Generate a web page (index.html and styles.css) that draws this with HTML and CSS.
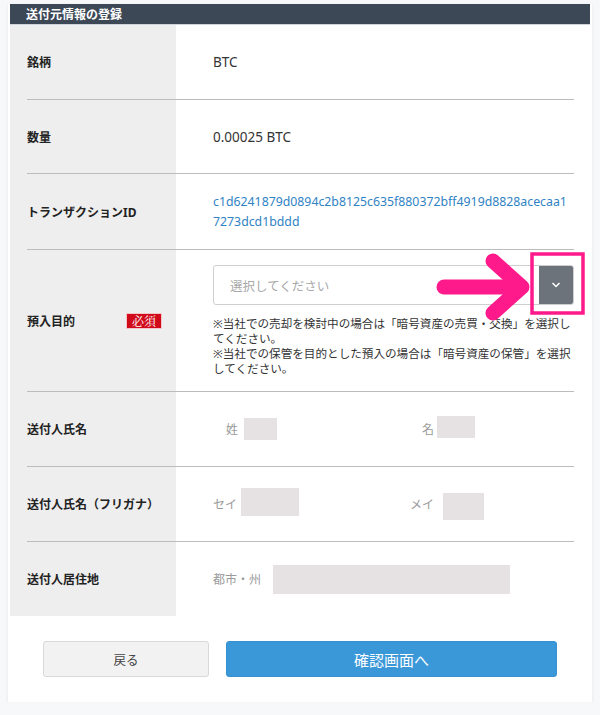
FILE: index.html
```html
<!DOCTYPE html>
<html lang="ja">
<head>
<meta charset="utf-8">
<link rel="stylesheet" href="styles.css">
</head>
<body>
<div class="page">
  <div class="card">
    <div class="card-head">送付元情報の登録</div>
    <div class="table">
      <div class="row row-1">
        <div class="label">銘柄</div>
        <div class="value">BTC</div>
      </div>
      <div class="row row-2">
        <div class="label">数量</div>
        <div class="value">0.00025 BTC</div>
      </div>
      <div class="row row-3">
        <div class="label">トランザクションID</div>
        <div class="value link">c1d6241879d0894c2b8125c635f880372bff4919d8828acecaa17273dcd1bddd</div>
      </div>
      <div class="row row-tall">
        <div class="label">預入目的<span class="req">必須</span></div>
        <div class="value value-top">
          <div class="select-wrap">
            <div class="select">
              <span class="placeholder">選択してください</span>
              <span class="select-btn">
                <svg width="10" height="6" viewBox="0 0 10 6"><path d="M1.5 1 L5 4.5 L8.5 1" fill="none" stroke="#fff" stroke-width="1.5"/></svg>
              </span>
            </div>
            <svg class="annot" width="160" height="70" viewBox="0 0 160 70">
              <path d="M25 35 H100" stroke="#ff1a8c" stroke-width="15" stroke-linecap="round" fill="none"/>
              <path d="M74 9 L103 35 L74 61" stroke="#ff1a8c" stroke-width="15" stroke-linecap="round" stroke-linejoin="round" fill="none"/>
              <rect x="113" y="2" width="51" height="59" fill="none" stroke="#ff1a8c" stroke-width="3.5"/>
            </svg>
          </div>
          <p class="note">※当社での売却を検討中の場合は「暗号資産の売買・交換」を選択してください。<br>※当社での保管を目的とした預入の場合は「暗号資産の保管」を選択してください。</p>
        </div>
      </div>
      <div class="row row-5">
        <div class="label">送付人氏名</div>
        <div class="value names">
          <div class="pair pair-sei"><span class="sub">姓</span><span class="mask m1"></span></div>
          <div class="pair pair-mei"><span class="sub">名</span><span class="mask m2"></span></div>
        </div>
      </div>
      <div class="row row-6">
        <div class="label">送付人氏名（フリガナ）</div>
        <div class="value names">
          <div class="pair pair-kana1"><span class="sub">セイ</span><span class="mask m3"></span></div>
          <div class="pair pair-kana2"><span class="sub">メイ</span><span class="mask m4"></span></div>
        </div>
      </div>
      <div class="row row-last">
        <div class="label">送付人居住地</div>
        <div class="value names">
          <div class="pair"><span class="sub">都市・州</span><span class="mask m5"></span></div>
        </div>
      </div>
    </div>
    <div class="actions">
      <button class="btn btn-back">戻る</button>
      <button class="btn btn-next">確認画面へ</button>
    </div>
  </div>
</div>
</body>
</html>
```
FILE: styles.css
```css
* { box-sizing: border-box; }
html, body {
  margin: 0;
  padding: 0;
  background: #f7f8fa;
  font-family: "Noto Sans", "Noto Sans CJK JP", sans-serif;
  color: #333;
}
.page {
  padding: 4px 8px 0 8px;
}
.card {
  background: #fff;
  padding: 0 2px;
  box-shadow: 0 1px 3px rgba(0,0,0,0.08);
  width: 584px;
}
.card-head {
  height: 21px;
  background: #3d4857;
  color: #fff;
  font-weight: bold;
  font-size: 12px;
  line-height: 21px;
  padding-left: 16px;
  border-bottom: 1px solid #cfd4da;
}
.table {
  background: linear-gradient(to right, #eeeeee 166px, #ffffff 166px);
  padding: 0 16px 0 17px;
}
.row {
  display: flex;
  align-items: center;
  min-height: 74px;
  border-bottom: 1px solid #bcbcbc;
}
.row-1 { min-height: 75px; }
.row-2 { min-height: 74px; }
.row-3 { min-height: 76px; }
.row-tall { min-height: 142px; }
.row-5 { min-height: 75px; }
.row-6 { min-height: 75px; }
.row-last {
  border-bottom: none;
  min-height: 74px;
}
.label {
  width: 149px;
  flex: none;
  font-size: 12px;
  font-weight: bold;
  color: #222;
  display: flex;
  align-items: center;
}
.req {
  margin-left: 51px;
  background: #d10a1b;
  color: #fff;
  font-size: 12px;
  font-weight: normal;
  line-height: 14px;
  padding: 0 5px;
  border: 1px solid #f3c4c8;
  font-family: "Noto Serif CJK JP", "Noto Sans CJK JP", serif;
}
.value {
  flex: 1;
  padding-left: 37px;
  font-size: 13.5px;
  color: #333;
  min-width: 0;
}
.link {
  color: #2f82c4;
  font-size: 12.3px;
  line-height: 20px;
  word-break: break-all;
  padding-top: 1px;
  padding-right: 3px;
}
.value-top {
  align-self: stretch;
  padding-top: 15px;
}
.select-wrap {
  position: relative;
}
.select {
  height: 40px;
  border: 1px solid #cfcfcf;
  border-radius: 3px;
  display: flex;
  align-items: center;
  justify-content: space-between;
  overflow: hidden;
}
.placeholder {
  padding-left: 16px;
  font-size: 12.5px;
  color: #a8a8a8;
}
.select-btn {
  width: 34px;
  height: 100%;
  background: #6c737a;
  display: flex;
  align-items: center;
  justify-content: center;
}
.annot {
  position: absolute;
  left: 206px;
  top: -13px;
  overflow: visible;
}
.note {
  margin: 11px 0 0 0;
  font-size: 11.6px;
  line-height: 15px;
  color: #333;
}
.names {
  display: flex;
  align-items: center;
  font-size: 12px;
}
.pair {
  display: flex;
  align-items: center;
}
.sub {
  color: #9a9a9a;
  font-size: 12px;
}
.mask {
  display: inline-block;
  background: #e6e1e2;
}
.pair-sei { margin-left: 13px; width: 196px; }
.m1 { width: 33px; height: 22px; margin-left: 6px; }
.m2 { width: 38px; height: 22px; margin-left: 3px; margin-top: -4px; }
.pair-kana1 { width: 197px; }
.m3 { width: 58px; height: 28px; margin-left: 4px; margin-top: -4px; }
.m4 { width: 41px; height: 27px; margin-left: 9px; margin-top: 4px; }
.m5 { width: 237px; height: 29px; margin-left: 12px; }
.actions {
  display: flex;
  gap: 17px;
  padding: 25px 33px 25px 33px;
}
.btn {
  height: 36px;
  border-radius: 3px;
  font-family: "Noto Sans", "Noto Sans CJK JP", sans-serif;
  cursor: pointer;
}
.btn-back {
  width: 166px;
  background: #f2f2f2;
  border: 1px solid #d9d9d9;
  color: #444;
  font-size: 12.5px;
}
.btn-next {
  flex: 1;
  background: #3a98d9;
  border: 1px solid #3490cf;
  color: #fff;
  font-size: 15px;
}
```
